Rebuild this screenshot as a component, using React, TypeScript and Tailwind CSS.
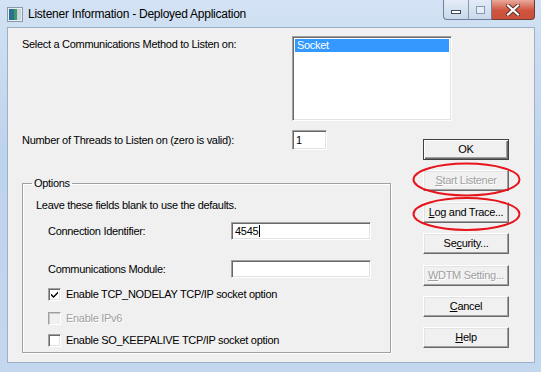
import React from "react";

const font = "font-['Liberation_Sans',Arial,sans-serif]";

function Btn({
  children,
  disabled,
  isDefault,
  className = "",
}: {
  children: React.ReactNode;
  disabled?: boolean;
  isDefault?: boolean;
  className?: string;
}) {
  return (
    <div
      className={`flex h-[21px] w-[86px] items-center justify-center bg-[#f0f0f0] text-[11px] leading-[13px] ${
        isDefault ? "border border-[#404040]" : "border border-b-[#696969] border-l-white border-r-[#696969] border-t-white"
      } ${disabled ? "text-[#a0a0a0] [text-shadow:1px_1px_0_#fff]" : "text-black"} ${className}`}
      style={{
        boxShadow: isDefault
          ? "inset 1px 1px 0 #fff, inset -1px -1px 0 #696969, inset -2px -2px 0 #a0a0a0"
          : "inset -1px -1px 0 #a0a0a0, inset 1px 1px 0 #e3e3e3",
      }}
    >
      {children}
    </div>
  );
}

function Sunken({ className = "", children }: { className?: string; children?: React.ReactNode }) {
  return (
    <div
      className={`border border-b-white border-l-[#a0a0a0] border-r-white border-t-[#a0a0a0] bg-white ${className}`}
      style={{ boxShadow: "inset 1px 1px 0 #696969, inset -1px -1px 0 #e3e3e3" }}
    >
      {children}
    </div>
  );
}

function Check({ checked, disabled, label }: { checked?: boolean; disabled?: boolean; label: string }) {
  return (
    <div className="flex h-[13px] items-center gap-[5px] pl-[12px]">
      <div
        className={`flex h-[13px] w-[13px] items-center justify-center border border-b-white border-l-[#a0a0a0] border-r-white border-t-[#a0a0a0] ${
          disabled ? "bg-[#f0f0f0]" : "bg-white"
        }`}
        style={{ boxShadow: disabled ? "inset 1px 1px 0 #c8c8c8" : "inset 1px 1px 0 #696969, inset -1px -1px 0 #e3e3e3" }}
      >
        {checked && (
          <svg width="9" height="9" viewBox="0 0 9 9">
            <path d="M1 3.5 L3.5 6 L8 1.5 L8 3.5 L3.5 8 L1 5.5 Z" fill="#000" />
          </svg>
        )}
      </div>
      <span className={disabled ? "text-[#a0a0a0] [text-shadow:1px_1px_0_#fff]" : "text-black"}>{label}</span>
    </div>
  );
}

function U({ children }: { children: React.ReactNode }) {
  return <span className="underline underline-offset-[1px]">{children}</span>;
}

export default function App() {
  return (
    <div className={`relative h-[372px] w-[541px] overflow-hidden bg-[linear-gradient(to_bottom,#d3e2f4,#bed3ec_40%,#c3d7ee)] ${font}`}>
      {/* title bar */}
      <div className="flex h-[27px] items-start">
        <div className="ml-[7px] mt-[7px]">
          <svg width="16" height="15" viewBox="0 0 16 15">
            <rect x="0.5" y="0.5" width="15" height="14" fill="#e9eef4" stroke="#8a98aa" />
            <rect x="2" y="2" width="5" height="11" fill="#2a6f8f" />
            <rect x="7" y="2" width="3" height="11" fill="#3d9a6a" />
            <rect x="10" y="2" width="4" height="11" fill="#c9d3de" />
          </svg>
        </div>
        <div className="ml-[5px] mt-[7px] text-[12px] leading-[15px] tracking-[-0.25px] text-black">
          Listener Information - Deployed Application
        </div>
        <div className="ml-auto mr-[6px] flex">
          <div className="flex h-[20px] rounded-bl-[4px] border border-t-0 border-[#6f809a] bg-[linear-gradient(to_bottom,#e3ecf7,#c9d8ea)]">
            <div className="flex w-[24px] items-end justify-center pb-[5px]">
              <div className="h-[4px] w-[10px] border border-[#3c4a5e] bg-white" />
            </div>
            <div className="w-px bg-[#8797ad]" />
            <div className="flex w-[22px] items-center justify-center">
              <div className="h-[8px] w-[9px] border border-[#8797ad] bg-[#e8eef6]" />
            </div>
          </div>
          <div className="flex h-[20px] w-[43px] items-center justify-center rounded-br-[4px] border border-l-0 border-t-0 border-[#6f3a32] bg-[linear-gradient(to_bottom,#e9a99c,#d0543f_55%,#c9503a)]">
            <svg width="14" height="12" viewBox="0 0 14 12">
              <path d="M2 1.5 L12 10.5 M12 1.5 L2 10.5" stroke="#5a2a22" strokeWidth="4" strokeLinecap="square" />
              <path d="M2 1.5 L12 10.5 M12 1.5 L2 10.5" stroke="#fff" strokeWidth="2.2" strokeLinecap="square" />
            </svg>
          </div>
        </div>
      </div>

      {/* client */}
      <div className="ml-[7px] h-[336px] w-[528px] border border-[#9cb0c7] bg-[#f0f0f0] text-[11px] leading-[13px] tracking-[-0.3px] text-black">
        <div className="ml-[14px] mt-[8px] flex h-[85px]">
          <div className="mt-[2px] w-[270px]">Select a Communications Method to Listen on:</div>
          <Sunken className="h-[85px] w-[160px] p-[2px]">
            <div className="h-[13px] bg-[#3399ff] pl-[2px] text-white">Socket</div>
          </Sunken>
        </div>

        <div className="ml-[14px] mt-[9px] flex">
          <div className="w-[401px]">
            <div className="flex h-[20px] items-center">
              <div className="w-[270px]">Number of Threads to Listen on (zero is valid):</div>
              <Sunken className="flex h-[20px] w-[35px] items-center pl-[3px]">1</Sunken>
            </div>

            <fieldset
              className="mt-[27px] h-[176px] w-[369px] border border-[#a0a0a0] px-0"
              style={{ boxShadow: "inset 1px 1px 0 #fff, 1px 1px 0 #fff" }}
            >
              <legend className="ml-[9px] px-[2px] leading-[13px]">Options</legend>
              <div className="ml-[13px] mt-[9px]">Leave these fields blank to use the defaults.</div>
              <div className="mt-[10px] flex h-[18px] items-center pl-[25px]">
                <div className="w-[183px]">Connection Identifier:</div>
                <Sunken className="flex h-[18px] w-[140px] items-center pl-[3px]">
                  4545<span className="ml-px h-[12px] w-px bg-black" />
                </Sunken>
              </div>
              <div className="mt-[20px] flex h-[18px] items-center pl-[25px]">
                <div className="w-[183px]">Communications Module:</div>
                <Sunken className="h-[18px] w-[140px]" />
              </div>
              <div className="mt-[10px] pl-[13px]">
                <Check checked label="Enable TCP_NODELAY TCP/IP socket option" />
              </div>
              <div className="mt-[11px] pl-[13px]">
                <Check disabled label="Enable IPv6" />
              </div>
              <div className="mt-[9px] pl-[13px]">
                <Check label="Enable SO_KEEPALIVE TCP/IP socket option" />
              </div>
            </fieldset>
          </div>

          <div className="mt-[9px] flex flex-col">
            <Btn isDefault>OK</Btn>
            <Btn disabled className="mt-[10px]">
              <U>S</U>tart Listener
            </Btn>
            <Btn className="mt-[11px]">
              <U>L</U>og and Trace...
            </Btn>
            <Btn className="mt-[10px]">
              Se<U>c</U>urity...
            </Btn>
            <Btn disabled className="mt-[11px]">
              <U>W</U>DTM Setting...
            </Btn>
            <Btn className="mt-[10px]">
              <U>C</U>ancel
            </Btn>
            <Btn className="mt-[10px]">
              <U>H</U>elp
            </Btn>
          </div>
        </div>
      </div>

      {/* red annotation ellipses */}
      <svg className="pointer-events-none absolute left-0 top-0" width="541" height="372">
        <ellipse cx="466.5" cy="179.5" rx="53" ry="16" fill="none" stroke="#e8141c" strokeWidth="2" />
        <ellipse cx="466.5" cy="214" rx="53" ry="16" fill="none" stroke="#e8141c" strokeWidth="2" />
      </svg>
    </div>
  );
}
